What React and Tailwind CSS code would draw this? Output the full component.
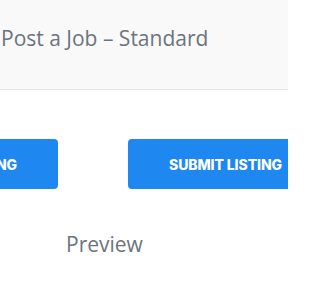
import React from "react";

const ListingButton = ({ children }) => (
  <button className="w-[195px] h-[50px] shrink-0 rounded-[4px] bg-[#1e87f0] text-white text-[14px] font-extrabold uppercase tracking-[-0.1px] font-['Inter',sans-serif]">
    {children}
  </button>
);

const App = () => {
  return (
    <div className="w-[288px] h-[288px] overflow-hidden bg-white font-['Open_Sans',sans-serif]">
      <div className="h-[90px] bg-[#f9f9f9] border-b border-[#e5e5e5] pl-[1px] pt-[23px]">
        <h1 className="text-[21px] leading-[30px] text-[#6b747e]">Post a Job – Standard</h1>
      </div>

      <div className="flex gap-[70px] ml-[-137px] mt-[49px]">
        <ListingButton>Submit Listing</ListingButton>
        <ListingButton>Submit Listing</ListingButton>
      </div>

      <div className="pl-[66px] mt-[40px]">
        <span className="text-[21px] leading-[30px] text-[#6b747e]">Preview</span>
      </div>
    </div>
  );
};

export default App;
